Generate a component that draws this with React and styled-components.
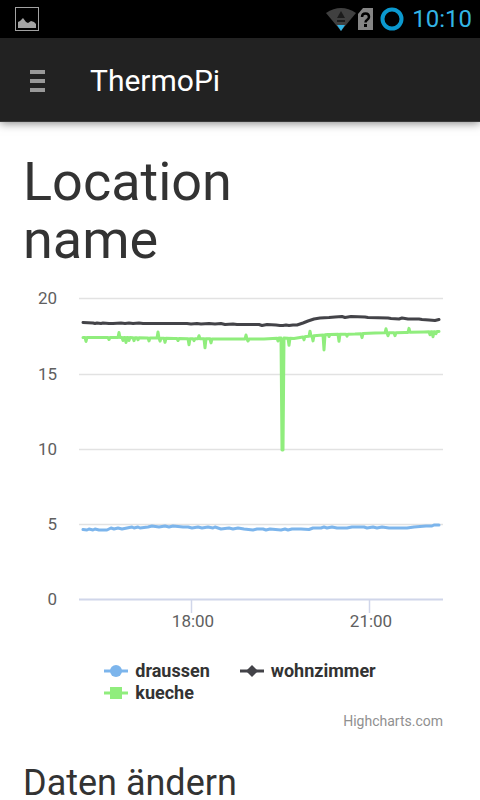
import React from "react";
import styled, { createGlobalStyle } from "styled-components";

const GlobalStyle = createGlobalStyle`
  *, *::before, *::after { box-sizing: border-box; }
  body {
    margin: 0;
    background: #fff;
    color: #333;
    font-family: Roboto, "Liberation Sans", sans-serif;
    overflow-x: hidden;
  }
`;

const Page = styled.div`
  display: flex;
  flex-direction: column;
`;

const StatusBar = styled.div`
  display: flex;
  align-items: center;
  justify-content: space-between;
  height: 38px;
  padding: 0 8px 0 15px;
  background: #000;
`;

const StatusGroup = styled.div`
  display: flex;
  align-items: center;
  gap: 2px;
`;

const RingIcon = styled.svg`
  margin: 0 6px 0 5px;
`;

const Clock = styled.time`
  color: #33b5e5;
  font-size: 24px;
  line-height: 40px;
`;

const AppBar = styled.header`
  display: flex;
  align-items: center;
  gap: 45px;
  height: 84px;
  padding: 0 30px;
  background: #222;
  border-bottom: 1px solid #3a3a3a;
  box-shadow: 0 1px 9px rgba(0, 0, 0, 0.5);
`;

const MenuButton = styled.button`
  display: flex;
  flex-direction: column;
  gap: 5px;
  width: 15px;
  padding: 3px 0 0;
  border: 0;
  background: none;
  cursor: pointer;
`;

const MenuBar = styled.span`
  width: 100%;
  height: 4px;
  background: #999;
`;

const Brand = styled.a`
  padding-top: 2px;
  color: #fff;
  font-size: 30px;
  line-height: 36px;
  text-decoration: none;
`;

const Content = styled.main`
  padding: 31px 23px 0;
`;

const Title = styled.h1`
  max-width: 240px;
  margin: 0;
  font-size: 54px;
  font-weight: 400;
  line-height: 58px;
`;

const Subtitle = styled.h2`
  margin: 36px 0 0;
  font-size: 36px;
  font-weight: 400;
  line-height: 34px;
`;

const ChartFigure = styled.figure`
  display: flex;
  flex-direction: column;
  margin: 16px 0 0;
`;

const Plot = styled.svg`
  display: block;
  width: 100%;
  height: auto;
`;

const AxisLabel = styled.text`
  fill: #606060;
  font-size: 17px;
  text-anchor: ${(p) => p.$anchor};
`;

const GridLine = styled.line`
  stroke: ${(p) => (p.$axis ? "#d0d6ea" : "#e2e2e2")};
  stroke-width: ${(p) => (p.$axis ? 2 : 1.5)};
`;

const SeriesLine = styled.polyline`
  fill: none;
  stroke: ${(p) => p.$color};
  stroke-width: 3;
  stroke-linejoin: round;
  stroke-linecap: round;
`;

const Legend = styled.div`
  display: grid;
  grid-template-columns: max-content max-content;
  column-gap: 30px;
  justify-content: center;
  margin-top: 25px;
`;

const LegendItem = styled.button`
  display: flex;
  align-items: center;
  gap: 7px;
  height: 22px;
  padding: 0;
  border: 0;
  background: none;
  color: #333;
  font-family: inherit;
  font-size: 18px;
  font-weight: 700;
  line-height: 22px;
  cursor: pointer;
`;

const Credits = styled.a`
  align-self: flex-end;
  margin: 8px 14px 0 0;
  color: #909090;
  font-size: 14px;
  line-height: 18px;
  text-decoration: none;
`;

const DARK = "#434348";
const GREEN = "#90ed7d";
const BLUE = "#7cb5ec";

/* Points are given in plot units: x from the left edge, y down from the 20° line. */
const wohnzimmer = [
  [4, 24.5], [14, 25], [16, 25.5], [18, 25], [22, 25.5], [24, 25], [30, 25.5], [34, 25.5], [42, 25], [46, 25.5], [50, 25],
  [54, 25.5], [60, 25], [64, 25.5], [80, 25.5], [104, 25.5], [108, 25.5], [112, 26], [118, 25.5], [122, 26], [130, 25.5],
  [136, 26], [142, 25.5], [146, 26.5], [154, 26], [158, 26.5], [166, 26.5], [180, 26.5], [183, 27.5], [188, 26.5],
  [197, 27], [201, 27.5], [204, 27.5], [207, 27], [210, 27.5], [214, 27], [218, 27], [224, 25], [229, 23], [235, 21],
  [241, 20], [250, 19.5], [256, 19], [263, 18.5], [266, 19.5], [272, 18.5], [286, 19], [289, 19.5], [309, 20],
  [312, 20.5], [320, 21], [323, 20], [329, 21], [340, 21], [343, 21.5], [350, 22], [356, 22.5], [358, 22], [360, 21.5],
];

const kuecheBase = [
  [4, 39.5], [45, 39.5], [75, 40], [95, 40.5], [145, 41], [185, 41], [200, 40], [215, 40.5], [227, 38.5], [250, 36.5],
  [276, 36], [296, 35], [326, 34.5], [345, 34], [360, 33.5],
];
/* Short outliers: [x, offset from the base line]. */
const kuecheSpikes = [
  [7, 4], [30, 2], [40, -5], [44, 3], [47, 5], [50, 3], [55, 3], [59, 2], [70, 3], [79, -6], [81, 3], [86, 4], [99, 2],
  [110, 6], [115, 2], [120, -3], [126, 9], [132, 4], [167, -4], [169, 2], [199, 3], [210, 7], [225, 3], [231, -5],
  [234, 5], [245, 15], [250, 2], [260, 7], [268, 2], [283, 4], [307, -4], [309, 3], [316, 3], [330, -4], [351, 3],
  [354, 5], [357, 2],
];

function baseAt(x) {
  const i = Math.max(1, kuecheBase.findIndex((p) => p[0] >= x));
  const [x0, y0] = kuecheBase[i - 1];
  const [x1, y1] = kuecheBase[i];
  return y0 + ((y1 - y0) * (x - x0)) / (x1 - x0);
}

const kueche = [
  ...kuecheBase,
  ...kuecheSpikes.flatMap(([x, d]) => [
    [x - 1, baseAt(x - 1)],
    [x, baseAt(x) + d],
    [x + 1, baseAt(x + 1)],
  ]),
  [202, 40], [203, 152], [204, 152], [205, 40],
].sort((a, b) => a[0] - b[0]);

const draussen = [
  [4, 231.5], [8, 232], [10, 231], [14, 232], [16, 231], [20, 232], [28, 232], [32, 230], [35, 231], [39, 230],
  [43, 231], [48, 230], [53, 229], [55, 230], [59, 229], [61, 230], [69, 229], [73, 228], [80, 229], [86, 228],
  [90, 229], [94, 228], [104, 229], [109, 229], [113, 230], [119, 229], [123, 230], [129, 229], [134, 230],
  [136, 229], [142, 231], [150, 230], [154, 231], [159, 230], [165, 231], [174, 232], [178, 231], [184, 231],
  [187, 232], [191, 231], [202, 232], [206, 231], [209, 232], [213, 231], [222, 231], [230, 231.5], [234, 230],
  [242, 230], [245, 229], [248, 230], [253, 229], [258, 230], [268, 230], [273, 229], [285, 229], [288, 230],
  [294, 229], [298, 230], [303, 229], [310, 230], [328, 230], [335, 229], [347, 228], [353, 228], [355, 227], [360, 227],
];

const series = [
  { name: "draussen", color: BLUE, points: draussen },
  { name: "wohnzimmer", color: DARK, points: wohnzimmer },
  { name: "kueche", color: GREEN, points: kueche },
];
const yTicks = [[20, 0], [15, 76], [10, 151], [5, 226], [0, 301]];
const xTicks = [["18:00", 112], ["21:00", 290]];

function LegendMark({ name, color }) {
  return (
    <svg width="24" height="14" viewBox="0 0 24 14" aria-hidden="true">
      <path d="M0 7H24" stroke={color} strokeWidth="3" />
      {name === "draussen" && <circle cx="12" cy="7" r="6" fill={color} />}
      {name === "wohnzimmer" && <path d="M12 1L18 7L12 13L6 7Z" fill={color} />}
      {name === "kueche" && <rect x="6" y="1" width="12" height="12" fill={color} />}
    </svg>
  );
}

function Chart() {
  return (
    <ChartFigure>
      <Plot viewBox="0 0 434 350" role="img" aria-label="Temperaturen">
        <g transform="translate(56 13)">
          {yTicks.map(([label, y]) => (
            <React.Fragment key={label}>
              <GridLine x1="0" x2="364" y1={y + 0.5} y2={y + 0.5} $axis={label === 0} />
              <AxisLabel x="-22" y={y + 6} $anchor="end">{label}</AxisLabel>
            </React.Fragment>
          ))}
          {xTicks.map(([label, x]) => (
            <React.Fragment key={label}>
              <path d={`M${x + 0.5} 301V315`} stroke="#d0d6ea" strokeWidth="1.5" />
              <AxisLabel x={x + 2} y="329" $anchor="middle">{label}</AxisLabel>
            </React.Fragment>
          ))}
          {series.map((s) => (
            <SeriesLine key={s.name} $color={s.color} points={s.points.map((p) => p.join(",")).join(" ")} />
          ))}
        </g>
      </Plot>
      <Legend>
        {series.map((s) => (
          <LegendItem key={s.name} type="button">
            <LegendMark name={s.name} color={s.color} />
            {s.name}
          </LegendItem>
        ))}
      </Legend>
      <Credits href="#highcharts">Highcharts.com</Credits>
    </ChartFigure>
  );
}

export default function App() {
  return (
    <Page>
      <GlobalStyle />
      <StatusBar>
        <svg width="24" height="24" viewBox="0 0 24 24" aria-hidden="true">
          <rect x="0.5" y="0.5" width="23" height="23" fill="none" stroke="#a3a3a3" />
          <path d="M3 21V15L5 14L8 11L11 15L13 16L16 14L19 15L21 17V21Z" fill="#a3a3a3" />
        </svg>
        <StatusGroup>
          <svg width="30" height="23" viewBox="0 0 30 23" aria-hidden="true">
            <path d="M0 5Q15 -5 30 5L15 23Z" fill="#404040" />
            <path d="M15 3L19 10H11ZM11 12H19V14H11Z" fill="#1c1c1c" />
            <path d="M11 17H19L15 23Z" fill="#33b5e5" />
          </svg>
          <svg width="15" height="22" viewBox="0 0 15 22" aria-hidden="true">
            <path d="M5 0H15V22H0V6Z" fill="#858585" />
            <path d="M4 9Q4 5.500 7.500 5.500T11 9Q11 10.500 9 12Q7.500 13 7.500 14.500" fill="none" stroke="#000" strokeWidth="2.500" />
            <rect x="6" y="16" width="3" height="3" fill="#000" />
          </svg>
          <RingIcon width="24" height="24" viewBox="0 0 24 24" aria-hidden="true">
            <circle cx="12" cy="12" r="9.500" fill="none" stroke="#0b99cf" strokeWidth="4" />
          </RingIcon>
          <Clock>10:10</Clock>
        </StatusGroup>
      </StatusBar>
      <AppBar>
        <MenuButton type="button" aria-label="Menü">
          <MenuBar />
          <MenuBar />
          <MenuBar />
        </MenuButton>
        <Brand href="#home">ThermoPi</Brand>
      </AppBar>
      <Content>
        <Title>Location name</Title>
        <Chart />
        <Subtitle>Daten ändern</Subtitle>
      </Content>
    </Page>
  );
}
